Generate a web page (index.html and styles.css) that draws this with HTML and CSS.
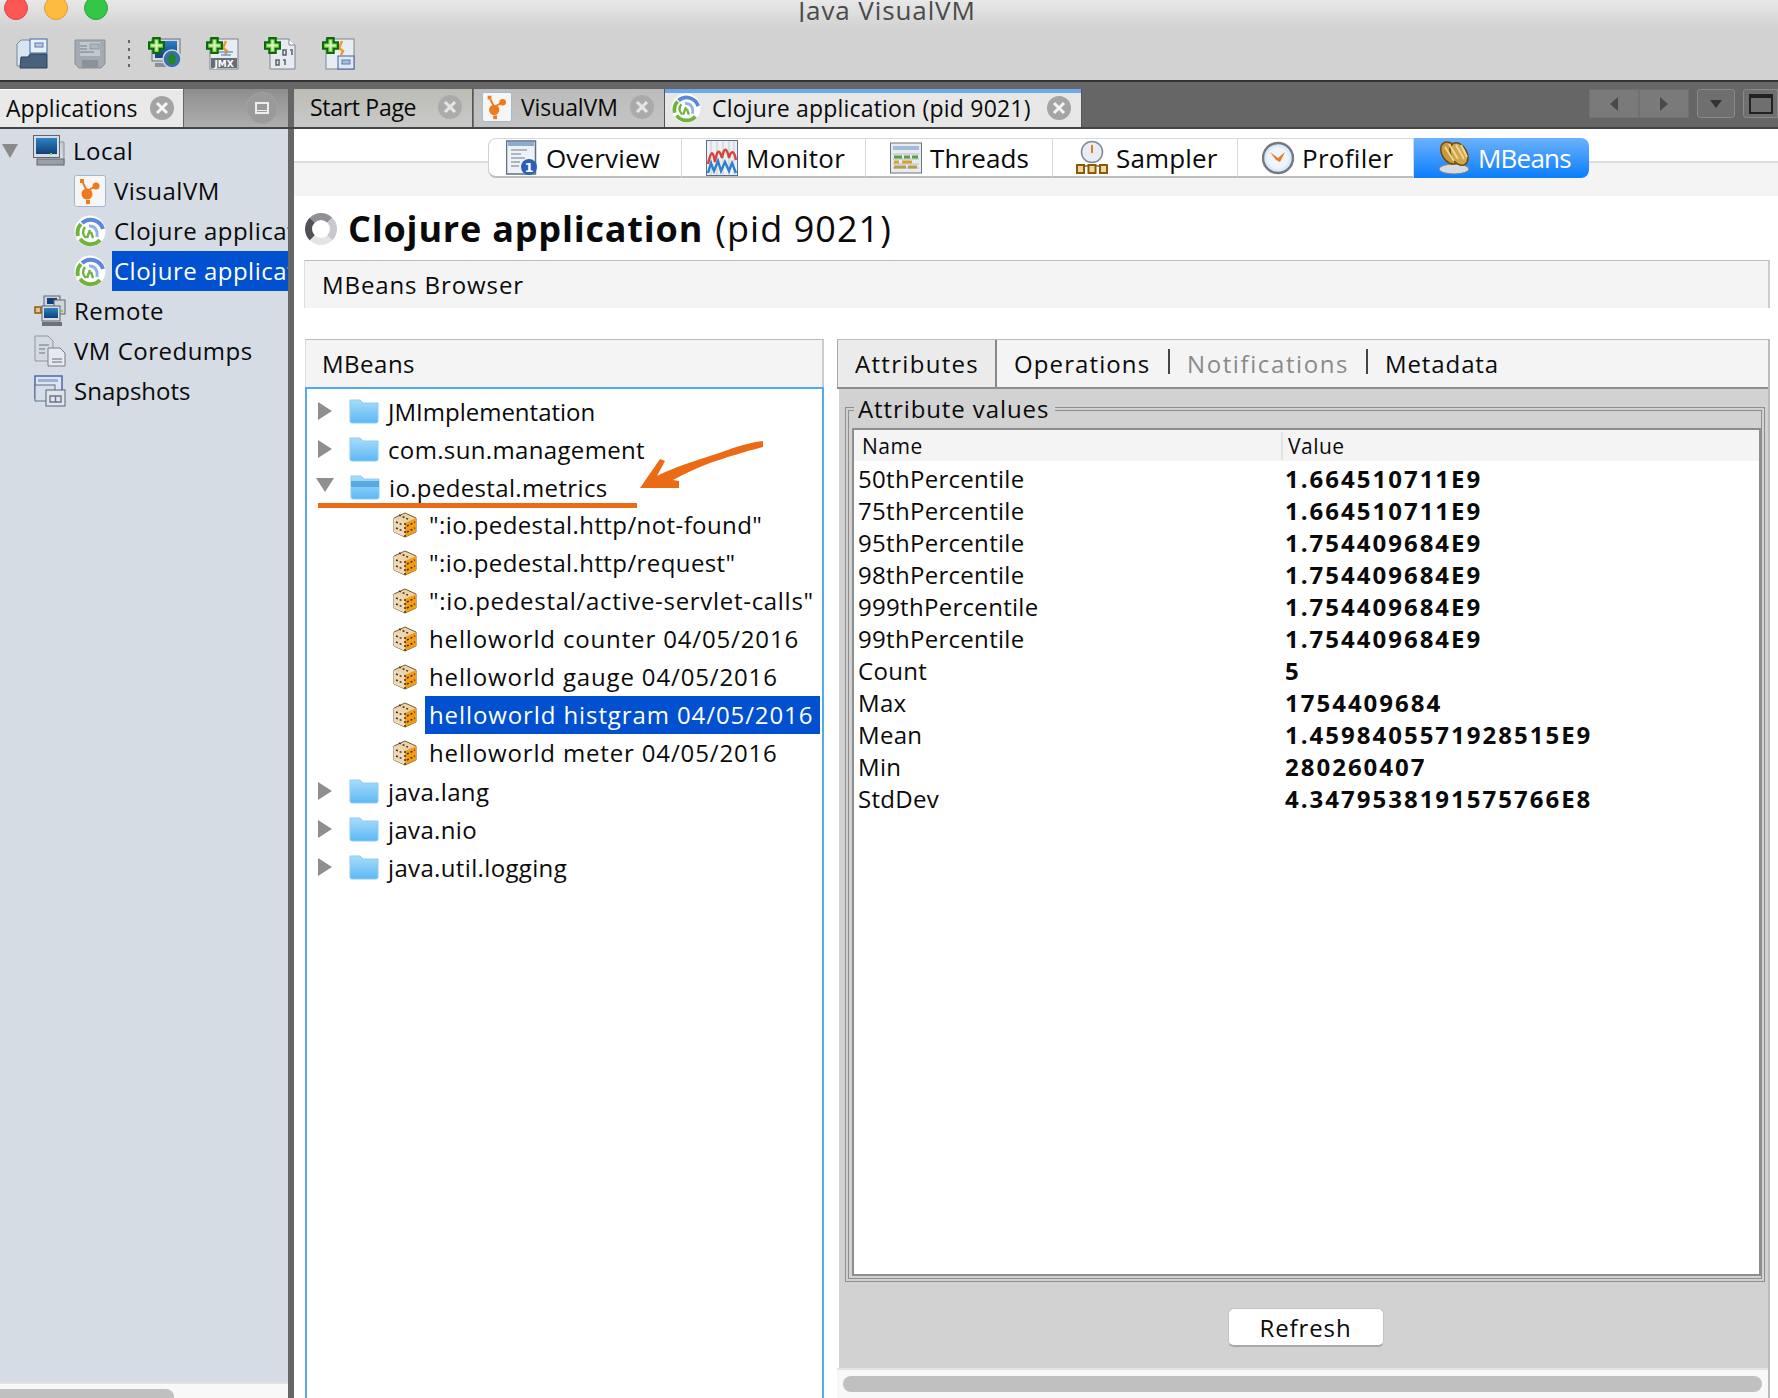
FILE: index.html
```html
<!DOCTYPE html>
<html lang="en">
<head>
<meta charset="utf-8">
<title>Java VisualVM</title>
<link rel="stylesheet" href="styles.css">
</head>
<body>
<svg class="defs" width="0" height="0" aria-hidden="true">
  <defs>
    <linearGradient id="gFolder" x1="0" y1="0" x2="0" y2="1"><stop offset="0" stop-color="#a8dcfb"/><stop offset="1" stop-color="#5cb8f4"/></linearGradient>
    <linearGradient id="gScreen" x1="0" y1="0" x2="0" y2="1"><stop offset="0" stop-color="#2b82c4"/><stop offset="1" stop-color="#123f78"/></linearGradient>
    <symbol id="i-plus" viewBox="0 0 16 16"><path d="M5 1h6v4h4v6h-4v4H5v-4H1V5h4z" fill="#7fd04a" stroke="#0a6a0a" stroke-width="2"/><path d="M7 3h2v4h4v2H9v4H7V9H3V7h4z" fill="#d9f7c0"/></symbol>
    <symbol id="i-open" viewBox="0 0 32 32"><path d="M1 28V6l4-4h8l3 3v5h10v18z" fill="#d7e4f2" stroke="#7a8794"/><rect x="14" y="1" width="17" height="14" fill="#e9eff7" stroke="#3f66a8"/><rect x="19" y="5" width="8" height="4" fill="#b9cbe4" stroke="#5a7db5"/><path d="M4 30l1-11h7l2-3h17v14z" fill="#47617e" stroke="#2f4358"/></symbol>
    <symbol id="i-save" viewBox="0 0 32 32"><path d="M1 2h30v24l-4 4H5l-4-4z" fill="#a3aab2" stroke="#8a929a"/><rect x="6" y="4" width="20" height="14" fill="#c2c8cf"/><rect x="16" y="6" width="9" height="5" fill="#adb6c0" stroke="#8f9aa6"/><path d="M6 8h7M6 11h7M6 14h14" stroke="#8f969e" stroke-width="1.4"/><rect x="8" y="22" width="16" height="8" fill="#8b929a"/></symbol>
    <symbol id="i-addremote" viewBox="0 0 32 32"><rect x="3" y="1" width="28" height="22" fill="#d5dae0" stroke="#6a7078"/><rect x="6" y="3" width="22" height="17" fill="url(#gScreen)"/><rect x="6" y="25" width="20" height="4" fill="#8a9098"/><circle cx="23" cy="21" r="9" fill="#3a6ea5" stroke="#c9d6e5" stroke-width="1.5"/><path d="M18 20l5-5 5 5-2 1v5h-6v-5z" fill="#1e8a1e"/></symbol>
    <symbol id="i-jmx" viewBox="0 0 32 32"><rect x="3" y="1" width="28" height="30" fill="#e8edf3" stroke="#7d858e"/><path d="M19 3l-3 7 4 3-2 4" stroke="#f09a2a" stroke-width="2.5" fill="none"/><path d="M12 14h14M14 17h10" stroke="#6e9cc8" stroke-width="1.4"/><rect x="4" y="20" width="26" height="10" fill="#666d76"/><text class="svg-jmx" x="17" y="29" text-anchor="middle">JMX</text></symbol>
    <symbol id="i-dump" viewBox="0 0 32 32"><path d="M5 1h19l6 6v24H5z" fill="#e6ebf1" stroke="#7d858e"/><path d="M24 1v6h6" fill="#fff" stroke="#7d858e"/><path d="M18 12h3v5h-3zM25 12h2v5M11 22h3v5h-3zM18 22h2v5" stroke="#59616b" stroke-width="1.5" fill="none"/></symbol>
    <symbol id="i-snapadd" viewBox="0 0 32 32"><rect x="3" y="1" width="28" height="30" fill="#e8edf3" stroke="#7d858e"/><path d="M19 3l-3 7 4 3-2 4" stroke="#f09a2a" stroke-width="2.5" fill="none"/><rect x="15" y="18" width="16" height="13" fill="#dfe7f2" stroke="#3f5fa5"/><rect x="19" y="22" width="8" height="4" fill="#a9bddb" stroke="#5a7db5"/></symbol>
    <symbol id="i-local" viewBox="0 0 32 32"><rect x="0.5" y="0.5" width="26" height="22" fill="#d8dde3" stroke="#5e656d"/><rect x="3" y="3" width="21" height="16" fill="url(#gScreen)"/><rect x="17" y="18" width="2" height="2" fill="#7ddc3a"/><path d="M27 7h4v22" stroke="#8b9199" fill="#c9ced4"/><rect x="4" y="24" width="27" height="6" fill="#9aa0a7" stroke="#62686f"/></symbol>
    <symbol id="i-vvm" viewBox="0 0 32 32"><rect x="0.5" y="0.5" width="31" height="31" rx="2" fill="#f6f6f4" stroke="#9db6d2"/><rect x="6" y="4" width="4" height="4" fill="#ee7a1d"/><circle cx="22" cy="11" r="3.5" fill="#ee7a1d"/><circle cx="13" cy="19" r="5.5" fill="#ee7a1d"/><rect x="12" y="25" width="4" height="4" fill="#ee7a1d"/><path d="M9 8l4 8 7-4" stroke="#ee7a1d" stroke-width="2" fill="none"/></symbol>
    <symbol id="i-clj" viewBox="0 0 32 32"><circle cx="16" cy="16" r="15.5" fill="#fff"/><path d="M4 21a13 13 0 0 1 3-12" stroke="#6fb33d" stroke-width="4" fill="none"/><path d="M6 24a13 13 0 0 0 20 1" stroke="#6fb33d" stroke-width="4" fill="none"/><path d="M8 8a13 13 0 0 1 21 6" stroke="#5b88db" stroke-width="4" fill="none"/><path d="M15 11c6 0 9 4 8 11" stroke="#8fb0e8" stroke-width="3" fill="none"/><path d="M11 12c-3 4-2 8 1 11M16 15l-3 8M17 17l2 6" stroke="#6fb33d" stroke-width="2.4" fill="none"/></symbol>
    <symbol id="i-remote" viewBox="0 0 32 32"><rect x="10" y="1" width="16" height="13" fill="#d0d5db" stroke="#5e656d"/><rect x="13" y="3" width="10" height="6" fill="#123f78"/><rect x="20" y="5" width="11" height="14" fill="#d0d5db" stroke="#5e656d"/><rect x="8" y="11" width="18" height="15" fill="#d8dde3" stroke="#5e656d"/><rect x="10" y="13" width="14" height="10" fill="url(#gScreen)"/><rect x="1" y="12" width="6" height="6" fill="#e8c080" stroke="#8a5a18" stroke-width="1.5"/><rect x="8" y="27" width="20" height="4" fill="#6c727a"/><rect x="27" y="15" width="2" height="2" fill="#7ddc3a"/></symbol>
    <symbol id="i-core" viewBox="0 0 32 32"><path d="M1 1h13l5 5v20H1z" fill="#d5dae2" stroke="#8f96a0"/><path d="M14 13h12l5 5v13H14z" fill="#e6eaef" stroke="#767d87"/><path d="M5 10h10M5 14h6M5 18h6M18 24h10M18 27h10" stroke="#8f96a0" stroke-width="1.4"/></symbol>
    <symbol id="i-snap" viewBox="0 0 32 32"><rect x="1" y="1" width="27" height="22" fill="#dde4ee" stroke="#4868ac" stroke-width="1.5"/><rect x="4" y="4" width="20" height="3" fill="#9cb2dc"/><rect x="1" y="10" width="20" height="16" fill="#d5dde8" stroke="#5c6e8a"/><rect x="12" y="15" width="19" height="16" fill="#dfe5ed" stroke="#566274"/><path d="M16 21h11v6H16zM21.500 21v6" fill="none" stroke="#6a7583" stroke-width="1.4"/></symbol>
    <symbol id="i-overview" viewBox="0 0 32 36"><rect x="0.500" y="1" width="29" height="33" fill="#eef1f5" stroke="#5a6f8a" stroke-width="1.5"/><rect x="2" y="2" width="26" height="4" fill="#8daad0"/><path d="M5 10h16M5 14h10M5 18h14M5 22h9M5 26h8" stroke="#9aa3ae" stroke-width="1.5"/><circle cx="23" cy="27" r="8" fill="#2a5fb8"/><text class="svg-one" x="23" y="32" text-anchor="middle">1</text></symbol>
    <symbol id="i-monitor" viewBox="0 0 32 36"><rect x="0.500" y="0.500" width="31" height="35" fill="#eef0f4" stroke="#5a6f8a"/><path d="M5 1v34M11 1v34M17 1v34M23 1v34M28 1v34" stroke="#c4ccd6"/><path d="M2 24c3-14 5-14 7-2 2-12 4-14 7-4 2-12 5-10 7 0 2-8 5-8 7 2" stroke="#d6433a" stroke-width="2.400" fill="none"/><path d="M2 33l3-10 3 8 4-10 3 10 4-9 4 9 3-8 4 10" stroke="#2e7fd0" stroke-width="2.400" fill="none"/></symbol>
    <symbol id="i-threads" viewBox="0 0 32 36"><rect x="0.500" y="3" width="31" height="30" fill="#e8ebef" stroke="#6c737c"/><rect x="3" y="6" width="26" height="4" fill="#a5bcd8"/><path d="M3 14h26M3 19h26M3 24h26M3 28h26" stroke="#b7bcc2"/><path d="M4 17h8M14 17h6M22 17h6" stroke="#5aa03c" stroke-width="3"/><path d="M4 22h5M12 22h10" stroke="#d6a22a" stroke-width="3"/><path d="M4 27h12M18 27h9" stroke="#b99b55" stroke-width="3"/></symbol>
    <symbol id="i-sampler" viewBox="0 0 32 36"><circle cx="16" cy="12" r="10.500" fill="#e7edf3" stroke="#7f8a96" stroke-width="1.500"/><path d="M16 5v8" stroke="#dc7a26" stroke-width="2"/><path d="M4 26h24" stroke="#8a6a28" stroke-width="1.500"/><rect x="1" y="25" width="7" height="8" fill="#edd9a0" stroke="#8a5a08" stroke-width="2"/><rect x="12.500" y="25" width="7" height="8" fill="#edd9a0" stroke="#8a5a08" stroke-width="2"/><rect x="24" y="25" width="7" height="8" fill="#edd9a0" stroke="#8a5a08" stroke-width="2"/></symbol>
    <symbol id="i-profiler" viewBox="0 0 32 36"><circle cx="16" cy="18" r="15" fill="#dde9f5" stroke="#717a84" stroke-width="2.500"/><circle cx="16" cy="18" r="11" fill="#eef5fb"/><path d="M8 12l8 6 7-6-5 10-4-2z" fill="#e57c26"/></symbol>
    <symbol id="i-mbeans" viewBox="0 0 32 36"><ellipse cx="16" cy="29" rx="15" ry="5" fill="#d7dbe0" stroke="#76808a"/><ellipse cx="12" cy="13" rx="8" ry="12" fill="#c99a3c" stroke="#6f4a10" stroke-width="1.500" transform="rotate(-32 12 13)"/><ellipse cx="21" cy="14" rx="8" ry="12" fill="#d2a648" stroke="#6f4a10" stroke-width="1.500" transform="rotate(-28 21 14)"/><path d="M7 7l9 14M11 4l9 15M18 5l8 14M23 5l6 12" stroke="#f0d9a0" stroke-width="1.800"/></symbol>
    <symbol id="i-folder" viewBox="0 0 30 26"><path d="M1 23V2h10l3 3h15v18a2 2 0 0 1-2 2H3a2 2 0 0 1-2-2z" fill="url(#gFolder)" stroke="#8fcbf3"/></symbol>
    <symbol id="i-folderopen" viewBox="0 0 30 26"><path d="M1 23V2h10l3 3h15v18a2 2 0 0 1-2 2H3a2 2 0 0 1-2-2z" fill="url(#gFolder)" stroke="#8fcbf3"/><path d="M1 7h28v6H1z" fill="#5aa8e0"/></symbol>
    <symbol id="i-bean" viewBox="0 0 26 26"><path d="M13 1l11 5v14l-11 5-11-5V6z" fill="#eed3a8" stroke="#6f5a34"/><path d="M13 11l11-5v14l-11 5z" fill="#f39c16"/><path d="M2 6l11 5v14l-11-5z" fill="#efd9b8"/><path d="M13 11v14M7 3l11 5M4 10l7 3M4 16l7 3M15 14l8-4M15 20l8-4" stroke="#3e2f18" stroke-width="1.500" stroke-dasharray="2 2"/></symbol>
    <symbol id="i-close" viewBox="0 0 24 24"><circle cx="12" cy="12" r="12" fill="#a4a4a4"/><path d="M7 7l10 10M17 7L7 17" stroke="#f4f4f4" stroke-width="3"/></symbol>
  </defs>
</svg>

<div class="app">
  <header class="chrome">
    <div class="titlebar">
      <span class="light light-red"></span><span class="light light-yellow"></span><span class="light light-green"></span>
      <span class="wintitle">Java VisualVM</span>
    </div>
    <div class="toolbar">
      <svg class="tool"><use href="#i-open"/></svg>
      <svg class="tool"><use href="#i-save"/></svg>
      <span class="toolsep"></span>
      <span class="tool addtool"><svg class="tool"><use href="#i-addremote"/></svg><svg class="plus"><use href="#i-plus"/></svg></span>
      <span class="tool addtool"><svg class="tool"><use href="#i-jmx"/></svg><svg class="plus"><use href="#i-plus"/></svg></span>
      <span class="tool addtool"><svg class="tool"><use href="#i-dump"/></svg><svg class="plus"><use href="#i-plus"/></svg></span>
      <span class="tool addtool"><svg class="tool"><use href="#i-snapadd"/></svg><svg class="plus"><use href="#i-plus"/></svg></span>
    </div>
  </header>

  <div class="tabbar">
    <div class="dock-head">
      <div class="dock-tab"><span class="dock-label">Applications</span><svg class="close"><use href="#i-close"/></svg></div>
      <div class="dock-rest"><span class="minbtn"><span class="minglyph"></span></span></div>
    </div>
    <div class="doctabs">
      <div class="doctab doctab-start"><span>Start Page</span><svg class="close close-dim"><use href="#i-close"/></svg></div>
      <div class="doctab doctab-vvm"><svg class="tabicon"><use href="#i-vvm"/></svg><span>VisualVM</span><svg class="close close-dim"><use href="#i-close"/></svg></div>
      <div class="doctab doctab-active"><svg class="tabicon"><use href="#i-clj"/></svg><span>Clojure application (pid 9021)</span><svg class="close"><use href="#i-close"/></svg></div>
      <div class="tabctrls">
        <span class="ctrl ctrl-arrow"><span class="tri tri-l"></span></span>
        <span class="ctrl ctrl-arrow"><span class="tri tri-r"></span></span>
        <span class="ctrl ctrl-drop"><span class="tri tri-d"></span></span>
        <span class="ctrl ctrl-win"><span class="winglyph"></span></span>
      </div>
    </div>
  </div>

  <div class="main">
    <aside class="side">
      <div class="apptree">
        <div class="arow"><span class="twist twist-open"></span><svg class="aicon"><use href="#i-local"/></svg><span class="alabel">Local</span></div>
        <div class="arow arow-child"><svg class="aicon"><use href="#i-vvm"/></svg><span class="alabel">VisualVM</span></div>
        <div class="arow arow-child"><svg class="aicon"><use href="#i-clj"/></svg><span class="alabel">Clojure application (pid 9020)</span></div>
        <div class="arow arow-child"><svg class="aicon"><use href="#i-clj"/></svg><span class="alabel alabel-sel">Clojure application (pid 9021)</span></div>
        <div class="arow arow-top"><svg class="aicon"><use href="#i-remote"/></svg><span class="alabel">Remote</span></div>
        <div class="arow arow-top"><svg class="aicon"><use href="#i-core"/></svg><span class="alabel">VM Coredumps</span></div>
        <div class="arow arow-top"><svg class="aicon"><use href="#i-snap"/></svg><span class="alabel alabel-tight">Snapshots</span></div>
      </div>
      <div class="side-scroll"><span class="side-thumb"></span></div>
    </aside>

    <section class="content">
      <div class="viewbar">
        <div class="viewbtns">
          <div class="vbtn vbtn-overview"><svg class="vicon"><use href="#i-overview"/></svg>Overview</div>
          <div class="vbtn vbtn-monitor"><svg class="vicon"><use href="#i-monitor"/></svg>Monitor</div>
          <div class="vbtn vbtn-threads"><svg class="vicon"><use href="#i-threads"/></svg>Threads</div>
          <div class="vbtn vbtn-sampler"><svg class="vicon"><use href="#i-sampler"/></svg>Sampler</div>
          <div class="vbtn vbtn-profiler"><svg class="vicon"><use href="#i-profiler"/></svg>Profiler</div>
          <div class="vbtn vbtn-mbeans"><svg class="vicon"><use href="#i-mbeans"/></svg>MBeans</div>
        </div>
      </div>

      <div class="heading"><span class="spinner"></span><h1 class="htitle"><b>Clojure application</b> <span class="hpid">(pid 9021)</span></h1></div>
      <div class="browserband">MBeans Browser</div>

      <div class="columns">
        <div class="mcol">
          <div class="mhead">MBeans</div>
          <div class="mtree">
            <div class="mrow"><span class="mtwist"></span><svg class="mfolder"><use href="#i-folder"/></svg><span class="mlabel mlabel-jmi">JMImplementation</span></div>
            <div class="mrow"><span class="mtwist"></span><svg class="mfolder"><use href="#i-folder"/></svg><span class="mlabel">com.sun.management</span></div>
            <div class="mrow"><span class="mtwist-open"></span><svg class="mfolder"><use href="#i-folderopen"/></svg><span class="mlabel">io.pedestal.metrics</span></div>
            <div class="mrow mrow-leaf"><svg class="mbean"><use href="#i-bean"/></svg><span class="mleaf mleaf-q">":io.pedestal.http/not-found"</span></div>
            <div class="mrow mrow-leaf"><svg class="mbean"><use href="#i-bean"/></svg><span class="mleaf mleaf-q">":io.pedestal.http/request"</span></div>
            <div class="mrow mrow-leaf"><svg class="mbean"><use href="#i-bean"/></svg><span class="mleaf mleaf-a">":io.pedestal/active-servlet-calls"</span></div>
            <div class="mrow mrow-leaf"><svg class="mbean"><use href="#i-bean"/></svg><span class="mleaf">helloworld counter 04/05/2016</span></div>
            <div class="mrow mrow-leaf"><svg class="mbean"><use href="#i-bean"/></svg><span class="mleaf">helloworld gauge 04/05/2016</span></div>
            <div class="mrow mrow-leaf"><svg class="mbean"><use href="#i-bean"/></svg><span class="mleaf mleaf-sel">helloworld histgram 04/05/2016</span></div>
            <div class="mrow mrow-leaf"><svg class="mbean"><use href="#i-bean"/></svg><span class="mleaf">helloworld meter 04/05/2016</span></div>
            <div class="mrow"><span class="mtwist"></span><svg class="mfolder"><use href="#i-folder"/></svg><span class="mlabel">java.lang</span></div>
            <div class="mrow"><span class="mtwist"></span><svg class="mfolder"><use href="#i-folder"/></svg><span class="mlabel">java.nio</span></div>
            <div class="mrow"><span class="mtwist"></span><svg class="mfolder"><use href="#i-folder"/></svg><span class="mlabel">java.util.logging</span></div>
            <svg class="annot" viewBox="0 0 460 80">
              <path class="annot-fill" d="M0 64h319v5H0z"/>
              <path class="annot-fill" d="M322 49L342 20l5 2-8 15C362 25 395 17 415 9c10-3 20-6 30-7v6C425 13 410 18 392 24c-14 5-26 11-37 17l6 1v7z"/>
            </svg>
          </div>
        </div>

        <div class="rcol">
          <div class="rtabs">
            <div class="rtab rtab-active">Attributes</div>
            <div class="rtab rtab-ops rtab-sep">Operations</div>
            <div class="rtab rtab-off rtab-sep">Notifications</div>
            <div class="rtab rtab-meta">Metadata</div>
            <div class="rtab rtab-fill"></div>
          </div>
          <div class="rpanel">
            <fieldset class="attrset">
              <legend class="attrlegend">Attribute values</legend>
              <div class="attrtable">
                <div class="thead"><span class="th th-name">Name</span><span class="th th-val">Value</span></div>
                <div class="trow"><span class="tn">50thPercentile</span><span class="tv">1.664510711E9</span></div>
                <div class="trow"><span class="tn">75thPercentile</span><span class="tv">1.664510711E9</span></div>
                <div class="trow"><span class="tn">95thPercentile</span><span class="tv">1.754409684E9</span></div>
                <div class="trow"><span class="tn">98thPercentile</span><span class="tv">1.754409684E9</span></div>
                <div class="trow"><span class="tn">999thPercentile</span><span class="tv">1.754409684E9</span></div>
                <div class="trow"><span class="tn">99thPercentile</span><span class="tv">1.754409684E9</span></div>
                <div class="trow"><span class="tn">Count</span><span class="tv">5</span></div>
                <div class="trow"><span class="tn">Max</span><span class="tv">1754409684</span></div>
                <div class="trow"><span class="tn">Mean</span><span class="tv">1.4598405571928515E9</span></div>
                <div class="trow"><span class="tn">Min</span><span class="tv">280260407</span></div>
                <div class="trow"><span class="tn">StdDev</span><span class="tv">4.3479538191575766E8</span></div>
              </div>
            </fieldset>
            <div class="refreshbar"><button class="refresh" type="button">Refresh</button></div>
          </div>
          <div class="rscroll"><span class="rthumb"></span></div>
        </div>
      </div>
    </section>
  </div>
</div>
</body>
</html>
```
FILE: styles.css
```css
* { box-sizing: border-box; }
html, body { margin: 0; padding: 0; }
body {
  width: 1778px; height: 1398px; overflow: hidden; background: #fff; color: #0a0a0a;
  font-family: "Open Sans", "DejaVu Sans", sans-serif; font-size: 24px; letter-spacing: 0.5px;
}
.defs { position: absolute; }
.svg-jmx { font: bold 9px "DejaVu Sans", sans-serif; fill: #fff; letter-spacing: 0; }
.svg-one { font: bold 13px "DejaVu Sans", sans-serif; fill: #fff; letter-spacing: 0; }
.app { display: flex; flex-direction: column; width: 1778px; height: 1398px; }

.chrome { height: 82px; flex: none; background: linear-gradient(#e8e8e8, #d2d2d2 28px); border-bottom: 2px solid #333; }
.titlebar { height: 22px; display: flex; align-items: flex-start; overflow: hidden; padding-left: 4px; gap: 16px; }
.light { width: 24px; height: 24px; border-radius: 50%; margin-top: -4px; flex: none; }
.light-red { background: #fc5753; border: 1px solid #df4744; }
.light-yellow { background: #fdbc40; border: 1px solid #de9f34; }
.light-green { background: #33c748; border: 1px solid #27aa35; }
.wintitle { flex: 1; text-align: center; font-size: 26px; line-height: 20px; color: #4a4a4a; margin-left: -128px; letter-spacing: 0.9px; }
.toolbar { height: 58px; display: flex; align-items: flex-start; padding: 16px 0 0 16px; }
.tool { width: 32px; height: 32px; display: block; flex: none; }
.tool + .tool { margin-left: 26px; }
.toolsep { width: 2px; height: 28px; margin: 2px 19px 0 22px; background: repeating-linear-gradient(#666 0 3px, transparent 3px 8px); flex: none; }
.addtool { position: relative; margin-right: 26px; }
.toolsep + .addtool { margin-left: 0; }
.addtool + .addtool { margin-left: 0; }
.plus { position: absolute; left: -1px; top: -1px; width: 17px; height: 17px; }

.tabbar { height: 47px; flex: none; display: flex; background: #666; border-bottom: 2px solid #444; font-size: 23px; letter-spacing: 0.05px; }
.dock-head { width: 288px; display: flex; flex: none; padding-top: 7px; }
.dock-tab { width: 184px; display: flex; align-items: center; justify-content: space-between; padding: 0 9px 2px 6px; background: #e9e9e9; border-top: 1px solid #fff; }
.dock-rest { width: 104px; margin-left: 1px; display: flex; align-items: center; justify-content: flex-end; padding-right: 10px; background: linear-gradient(#8e8e8e, #aeaeae); }
.minbtn { width: 32px; height: 32px; border-radius: 50%; border: 1px solid #a4a4a4; background: #9a9a9a; display: flex; align-items: center; justify-content: center; }
.minglyph { width: 14px; height: 12px; border: 2px solid #eee; background: linear-gradient(#9a9a9a 0 6px, #eee 6px 7px, #9a9a9a 7px); }
.close { width: 24px; height: 24px; flex: none; display: block; }
.close-dim { opacity: .75; }
.doctabs { flex: 1; display: flex; margin-left: 6px; padding-top: 7px; }
.doctab { display: flex; align-items: center; height: 38px; padding: 0 10px 2px 0; border-right: 1px solid #555; white-space: nowrap; }
.doctab-start { width: 179px; justify-content: space-between; padding-left: 16px; background: linear-gradient(#bcbcb4, #c9c9c9); letter-spacing: -0.3px; }
.doctab-vvm { width: 192px; background: linear-gradient(#bcbcbc, #c4c4c4); padding-left: 8px; border-left: 1px solid #777; letter-spacing: -0.1px; }
.doctab-vvm span { margin-left: 9px; flex: 1; }
.doctab-active { width: 417px; padding-left: 6px; background: linear-gradient(#6fa8e8 0 4px, #e7e7e7 4px); padding-top: 2px; letter-spacing: 0.2px; }
.doctab-active span { flex: 1; margin-left: 11px; }
.tabicon { width: 30px; height: 30px; flex: none; }
.tabctrls { flex: 1; display: flex; justify-content: flex-end; gap: 8px; }
.ctrl { height: 29px; background: #7a7a7a; display: flex; align-items: center; justify-content: center; border: 1px solid #707070; }
.ctrl-arrow { width: 50px; }
.ctrl-arrow + .ctrl-arrow { margin-left: -8px; }
.ctrl-drop { width: 38px; border-radius: 3px; background: #6f6f6f; border-color: #8a8a8a; }
.ctrl-win { width: 35px; border-radius: 3px 0 0 3px; background: #6f6f6f; border-color: #8a8a8a; }
.tri { width: 0; height: 0; border-style: solid; border-color: transparent; }
.tri-l { border-width: 7px 8px 7px 0; border-right-color: #4a4a4a; }
.tri-r { border-width: 7px 0 7px 8px; border-left-color: #4a4a4a; }
.tri-d { border-width: 8px 6px 0; border-top-color: #333; }
.winglyph { width: 24px; height: 20px; border: 2px solid #222; border-top-width: 4px; }

.main { flex: 1; min-height: 0; display: flex; }
.side { width: 294px; flex: none; display: flex; flex-direction: column; border-right: 6px solid #666; background: #d5dce4; }
.apptree { flex: 1; padding-top: 2px; overflow: hidden; }
.arow { height: 40px; display: flex; align-items: center; white-space: nowrap; }
.arow-child { padding-left: 74px; }
.arow-top { padding-left: 34px; }
.twist { width: 0; height: 0; border-style: solid; border-color: transparent; flex: none; }
.twist-open { border-width: 14px 8px 0; border-top-color: #8a8a8a; margin: 0 15px 0 2px; }
.aicon { width: 32px; height: 32px; flex: none; }
.alabel { margin-left: 8px; line-height: 40px; }
.alabel-tight { letter-spacing: 0; }
.arow-child .alabel { margin-left: 6px; padding-left: 2px; flex: 1; min-width: 0; overflow: hidden; }
.alabel-sel { background: #0050cf; color: #fff; }
.side-scroll { height: 16px; flex: none; background: #f8f8f8; border-top: 2px solid #e2e2e2; padding-top: 5px; }
.side-thumb { display: block; width: 174px; height: 12px; background: #c0c0c0; border-radius: 0 8px 0 0; }

.content { flex: 1; min-width: 0; display: flex; flex-direction: column; }
.viewbar { height: 67px; flex: none; padding: 9px 0 0 194px; background: linear-gradient(#fff 32px, #ddd 32px, #ddd 34px, #f4f4f4 34px); }
.viewbtns { display: flex; height: 40px; }
.vbtn { display: flex; align-items: center; background: #fff; border: 1px solid #d8d8d8; border-bottom: 2px solid #bdbdbd; border-left: 0; font-size: 26px; white-space: nowrap; letter-spacing: 0.3px; }
.vbtn-overview { width: 194px; padding-left: 17px; border-left: 1px solid #cfcfcf; border-radius: 8px 0 0 8px; letter-spacing: 0.15px; }
.vbtn-monitor { width: 184px; padding-left: 24px; }
.vbtn-threads { width: 187px; padding-left: 24px; letter-spacing: 0.1px; }
.vbtn-sampler { width: 185px; padding-left: 23px; letter-spacing: 0.15px; }
.vbtn-profiler { width: 176px; padding-left: 24px; }
.vbtn-mbeans { width: 175px; padding-left: 24px; background: linear-gradient(#6cb2fd, #0a7dfb); color: #fff; border: 0; border-radius: 0 8px 8px 0; letter-spacing: -0.8px; }
.vicon { width: 32px; height: 36px; flex: none; margin-right: 8px; }

.heading { height: 64px; flex: none; display: flex; align-items: center; padding: 0 0 0 11px; }
.spinner { width: 32px; height: 32px; border-radius: 50%; border: 7px solid; border-color: #8e9096 #c7c9cc #e3e4e6 #4f5156; flex: none; margin-top: 2px; }
.htitle { margin: 0 0 0 11px; font-size: 36px; font-weight: 400; letter-spacing: 0.8px; white-space: nowrap; }
.htitle b { font-weight: 700; }
.hpid { margin-left: 2px; letter-spacing: 1.05px; }
.browserband { height: 48px; flex: none; margin: 0 8px 0 10px; padding-left: 17px; background: #f4f4f4; border-top: 1px solid #bcbcbc; border-left: 1px solid #ddd; border-right: 2px solid #ccc; display: flex; align-items: center; letter-spacing: 0.9px; }
.columns { flex: 1; min-height: 0; display: flex; margin-top: 32px; padding-left: 11px; }

.mcol { width: 519px; flex: none; display: flex; flex-direction: column; margin-top: -1px; }
.mhead { height: 48px; flex: none; padding: 0 0 0 16px; display: flex; align-items: center; background: #f4f4f4; border-top: 1px solid #bcbcbc; border-left: 1px solid #ddd; border-right: 2px solid #ccc; }
.mtree { flex: 1; min-height: 0; position: relative; border: 2px solid #55a7ee; border-bottom: 0; padding-top: 3px; }
.mrow { height: 38px; display: flex; align-items: center; white-space: nowrap; letter-spacing: 0.35px; }
.mtwist { width: 0; height: 0; border-style: solid; border-color: transparent; border-width: 9px 0 9px 14px; border-left-color: #8f8f8f; margin: 0 17px 0 11px; flex: none; }
.mtwist-open { width: 0; height: 0; flex: none; border-style: solid; border-color: #8f8f8f transparent transparent; border-width: 14px 9px 0; margin: -4px 16px 0 9px; }
.mfolder { width: 30px; height: 26px; flex: none; }
.mlabel { margin-left: 9px; }
.mlabel-jmi { letter-spacing: 0; }
.mrow-leaf { padding-left: 85px; }
.mbean { width: 26px; height: 26px; flex: none; margin-right: 7px; }
.mleaf { padding-left: 4px; line-height: 38px; letter-spacing: 0.85px; }
.mleaf-q { letter-spacing: 0.4px; }
.mleaf-a { letter-spacing: 0.7px; }
.mleaf-sel { background: #0050cf; color: #fff; width: 395px; flex: none; letter-spacing: 0.9px; }
.annot { position: absolute; left: 11px; top: 50px; width: 460px; height: 80px; overflow: visible; pointer-events: none; }
.annot-fill { fill: #ea6a15; }

.rcol { flex: 1; min-width: 0; margin: -1px 8px 0 13px; display: flex; flex-direction: column; border-right: 2px solid #bcbcbc; }
.rtabs { height: 50px; flex: none; display: flex; background: #f4f4f4; border-top: 1px solid #bcbcbc; border-bottom: 2px solid #8c8c8c; }
.rtab { display: flex; align-items: center; height: 47px; padding-left: 17px; letter-spacing: 0.9px; white-space: nowrap; }
.rtab-active { width: 160px; background: #ebebeb; border-left: 1px solid #aaa; border-right: 2px solid #888; letter-spacing: 1.3px; }
.rtab-ops { width: 173px; letter-spacing: 1.1px; }
.rtab-off { width: 198px; color: #8a8a8a; letter-spacing: 1.6px; }
.rtab-sep { position: relative; }
.rtab-sep::after { content: ""; position: absolute; right: 0; top: 9px; width: 2px; height: 25px; background: #444; }
.rtab-meta { width: 150px; }
.rtab-fill { flex: 1; }
.rpanel { flex: 1; min-height: 0; display: flex; flex-direction: column; background: #d2d2d2; padding-left: 6px; margin-left: 2px; }
.attrset { margin: 5px 3px 0 0; padding: 4px 0 2px 3px; border: 4px double #8f8f8f; flex: none; min-width: 0; }
.attrlegend { padding: 0 6px 0 4px; margin-left: 2px; line-height: 30px; letter-spacing: 0.9px; }
.attrtable { height: 848px; background: #fff; border: 2px solid #8e8e8e; }
.thead { height: 31px; display: flex; align-items: center; background: #f4f4f4; font-size: 21px; }
.th-name { width: 427px; padding-left: 8px; }
.th-val { padding-left: 5px; border-left: 2px solid #e3e3e3; height: 28px; line-height: 28px; }
.trow { height: 32px; display: flex; align-items: center; line-height: 32px; }
.thead + .trow { margin-top: 2px; }
.tn { width: 431px; padding-left: 4px; letter-spacing: 0.3px; }
.tv { font-weight: 700; letter-spacing: 2px; }
.refreshbar { flex: 1; display: flex; justify-content: center; align-items: flex-start; padding: 26px 2px 0 0; }
.refresh { width: 156px; height: 39px; background: #fff; border: 1px solid #c2c2c2; border-bottom: 2px solid #a8a8a8; border-radius: 6px; font: inherit; letter-spacing: 0.9px; color: #0a0a0a; padding: 0; }
.rscroll { height: 30px; flex: none; background: #f8f8f8; border-top: 2px solid #e2e2e2; padding: 6px 6px 0 6px; }
.rthumb { display: block; height: 16px; background: #c0c0c0; border-radius: 8px; }
```
